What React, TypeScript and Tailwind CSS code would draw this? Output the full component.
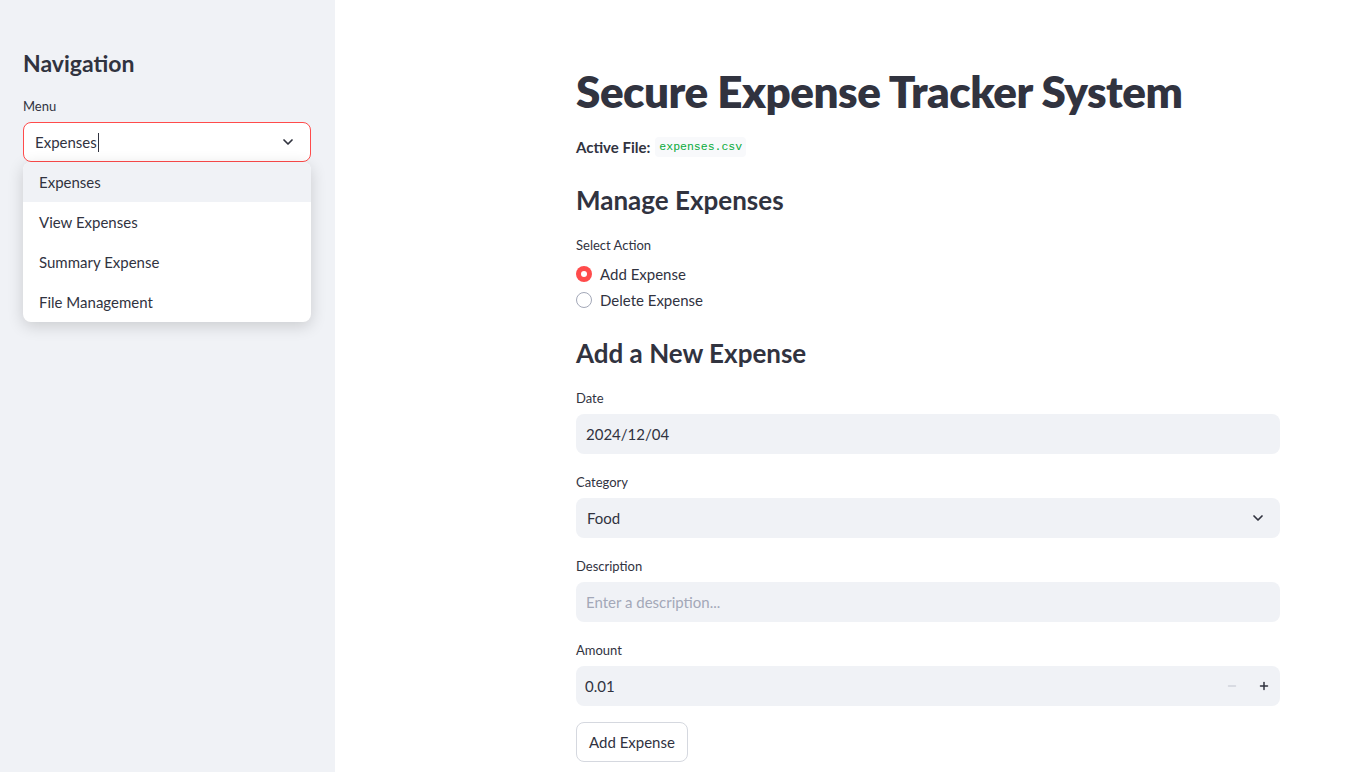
import { ChevronDown, Minus, Plus } from "lucide-react";

const menuItems = ["Expenses", "View Expenses", "Summary Expense", "File Management"];

const Label = ({ children, className = "" }: { children: string; className?: string }) => (
  <div className={`h-5 text-[13px] leading-5 text-[#31333f] ${className}`}>{children}</div>
);

const Radio = ({ checked, label }: { checked?: boolean; label: string }) => (
  <div className="flex h-[26px] items-center gap-2">
    {checked ? (
      <span className="flex h-4 w-4 items-center justify-center rounded-full bg-[#ff4b4b]">
        <span className="h-[6px] w-[6px] rounded-full bg-white" />
      </span>
    ) : (
      <span className="h-4 w-4 rounded-full border border-[#a3a8b8] bg-white" />
    )}
    <span className="text-[15px] text-[#31333f]">{label}</span>
  </div>
);

export default function App() {
  return (
    <div
      className="flex h-[772px] w-full overflow-hidden bg-white text-[#31333f]"
      style={{ fontFamily: "Lato, 'Noto Sans', sans-serif" }}
    >
      {/* sidebar */}
      <aside className="w-[335px] shrink-0 bg-[#f0f2f6] px-[23px] pt-[45px]">
        <h2 className="h-9 text-[23px] leading-9 font-bold">Navigation</h2>
        <Label className="mt-[15px]">Menu</Label>
        <div className="relative mt-[6px] w-[288px]">
          <div className="flex h-10 items-center justify-between rounded-lg border border-[#ff4b4b] bg-white pr-[14px] pl-[11px]">
            <span className="flex items-center text-[15px]">
              Expenses
              <span className="ml-[1px] h-[19px] w-px bg-[#31333f]" />
            </span>
            <ChevronDown size={16} strokeWidth={2.6} />
          </div>
          {/* dropdown */}
          <div className="absolute top-10 left-0 z-10 w-full overflow-hidden rounded-lg bg-white shadow-[0_4px_16px_rgba(0,0,0,0.16)]">
            {menuItems.map((item, i) => (
              <div
                key={item}
                className={`flex h-10 items-center px-4 text-[15px] ${i === 0 ? "bg-[#f0f2f6]" : ""}`}
              >
                {item}
              </div>
            ))}
          </div>
        </div>
      </aside>

      {/* main */}
      <main className="flex-1 pt-16 pl-[241px]">
        <div className="w-[704px]">
          <h1 className="h-[54px] text-[44px] leading-[54px] font-extrabold tracking-[-0.5px]">
            Secure Expense Tracker System
          </h1>

          <div className="mt-[17px] flex h-6 items-center gap-[5px] text-[15px]">
            <span className="font-bold">Active File:</span>
            <code
              className="rounded bg-[#f8f9fb] px-[4px] py-[1px] text-[11.5px] text-[#09ab3b]"
              style={{ fontFamily: "'Liberation Mono', monospace" }}
            >
              expenses.csv
            </code>
          </div>

          <h2 className="mt-[21px] h-10 text-[26px] leading-10 font-bold">Manage Expenses</h2>

          <Label className="mt-[15px]">Select Action</Label>
          <div className="mt-[6px]">
            <Radio checked label="Add Expense" />
            <Radio label="Delete Expense" />
          </div>

          <h2 className="mt-5 h-10 text-[26px] leading-10 font-bold">Add a New Expense</h2>

          <Label className="mt-[15px]">Date</Label>
          <div className="mt-[6px] flex h-10 items-center rounded-lg bg-[#f0f2f6] px-[10px] text-[15px]">
            2024/12/04
          </div>

          <Label className="mt-[18px]">Category</Label>
          <div className="mt-[6px] flex h-10 items-center justify-between rounded-lg bg-[#f0f2f6] pr-[14px] pl-[11px] text-[15px]">
            <span>Food</span>
            <ChevronDown size={16} strokeWidth={2.6} />
          </div>

          <Label className="mt-[18px]">Description</Label>
          <div className="mt-[6px] flex h-10 items-center rounded-lg bg-[#f0f2f6] px-[10px] text-[15px] text-[#a3a8b8]">
            Enter a description...
          </div>

          <Label className="mt-[18px]">Amount</Label>
          <div className="mt-[6px] flex h-10 items-center justify-between rounded-lg bg-[#f0f2f6] pl-[9px] text-[15px]">
            <span>0.01</span>
            <div className="flex h-full items-center">
              <span className="flex h-full w-8 items-center justify-center text-[#d0d3dc]">
                <Minus size={12} strokeWidth={3} />
              </span>
              <span className="flex h-full w-8 items-center justify-center">
                <Plus size={12} strokeWidth={3} />
              </span>
            </div>
          </div>

          <button className="mt-4 h-10 rounded-lg border border-[#d5d8df] bg-white px-3 text-[15px]">
            Add Expense
          </button>
        </div>
      </main>
    </div>
  );
}
